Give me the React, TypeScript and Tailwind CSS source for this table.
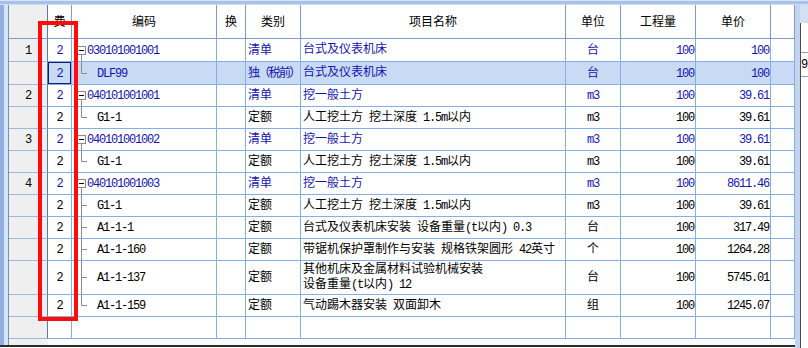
import React, { FC } from "react"

type Row = {
    rn?: string
    code?: string
    kind?: "parent" | "mid" | "last"
    cat?: string
    name?: string[]
    unit?: string
    qty?: string
    price?: string
    blue?: boolean
    sel?: boolean
    h: number
    hc: string
}

const rows: Row[] = [
    { rn: "1", code: "030101001001", kind: "parent", cat: "清单", name: ["台式及仪表机床"], unit: "台", qty: "100", price: "100", blue: true, h: 23, hc: "h-[23px]" },
    { code: "DLF99", kind: "last", cat: "独（税前）", name: ["台式及仪表机床"], unit: "台", qty: "100", price: "100", blue: true, sel: true, h: 23, hc: "h-[23px]" },
    { rn: "2", code: "040101001001", kind: "parent", cat: "清单", name: ["挖一般土方"], unit: "m3", qty: "100", price: "39.61", blue: true, h: 22, hc: "h-[22px]" },
    { code: "G1-1", kind: "last", cat: "定额", name: ["人工挖土方 挖土深度 1.5m以内"], unit: "m3", qty: "100", price: "39.61", h: 22, hc: "h-[22px]" },
    { rn: "3", code: "040101001002", kind: "parent", cat: "清单", name: ["挖一般土方"], unit: "m3", qty: "100", price: "39.61", blue: true, h: 22, hc: "h-[22px]" },
    { code: "G1-1", kind: "last", cat: "定额", name: ["人工挖土方 挖土深度 1.5m以内"], unit: "m3", qty: "100", price: "39.61", h: 22, hc: "h-[22px]" },
    { rn: "4", code: "040101001003", kind: "parent", cat: "清单", name: ["挖一般土方"], unit: "m3", qty: "100", price: "8611.46", blue: true, h: 22, hc: "h-[22px]" },
    { code: "G1-1", kind: "mid", cat: "定额", name: ["人工挖土方 挖土深度 1.5m以内"], unit: "m3", qty: "100", price: "39.61", h: 22, hc: "h-[22px]" },
    { code: "A1-1-1", kind: "mid", cat: "定额", name: ["台式及仪表机床安装 设备重量(t以内) 0.3"], unit: "台", qty: "100", price: "317.49", h: 22, hc: "h-[22px]" },
    { code: "A1-1-160", kind: "mid", cat: "定额", name: ["带锯机保护罩制作与安装 规格铁架圆形 42英寸"], unit: "个", qty: "100", price: "1264.28", h: 22, hc: "h-[22px]" },
    { code: "A1-1-137", kind: "mid", cat: "定额", name: ["其他机床及金属材料试验机械安装", "设备重量(t以内) 12"], unit: "台", qty: "100", price: "5745.01", h: 34, hc: "h-[34px]" },
    { code: "A1-1-159", kind: "last", cat: "定额", name: ["气动踢木器安装 双面卸木"], unit: "组", qty: "100", price: "1245.07", h: 22, hc: "h-[22px]" },
    { h: 22, hc: "h-[22px]" },
]

// ascii runs get squeezed so digits take half a CJK cell, like SimSun
const Txt: FC<{ s?: string }> = ({ s }) => {
    if (!s) return null
    return (
        <>
            {s.split(/([\x20-\x7e]+)/).filter(Boolean).map((p, i) =>
                /^[\x20-\x7e]+$/.test(p)
                    ? <span key={i} className="tracking-[-1.2px]">{p}</span>
                    : <span key={i}>{p}</span>
            )}
        </>
    )
}

const Tree: FC<{ kind: "parent" | "mid" | "last"; h: number }> = ({ kind, h }) => {
    const mid = Math.floor(h / 2) + 0.5
    if (kind === "parent") {
        return (
            <svg width={15} height={h} className="shrink-0">
                <rect x={5.5} y={mid - 4} width={8} height={8} fill="white" stroke="#8c8c8c" />
                <line x1={7} y1={mid} x2={12} y2={mid} stroke="#000" />
                <line x1={9.5} y1={mid + 4} x2={9.5} y2={h} stroke="#8c8c8c" />
            </svg>
        )
    }
    return (
        <svg width={25} height={h} className="shrink-0">
            <line x1={9.5} y1={0} x2={9.5} y2={kind === "last" ? mid : h} stroke="#8c8c8c" />
            <line x1={9.5} y1={mid} x2={15} y2={mid} stroke="#8c8c8c" />
        </svg>
    )
}

const cell = "border-r border-b border-[#86aee6] flex items-center overflow-hidden whitespace-nowrap"

const GridRow: FC<{ r: Row }> = ({ r }) => {
    const tc = r.blue ? "text-[#1414b4]" : "text-black"
    const bg = r.sel ? "bg-[#c8daf4]" : "bg-white"
    return (
        <div className={`grid grid-cols-[39px_24px_145px_29px_55px_265px_55px_75px_75px_24px] ${r.hc}`}>
            <div className="border-r border-b border-r-[#5b79a8] border-b-[#9bb8e0] bg-[#efefef] flex items-center justify-center pt-[1px] text-black">
                <Txt s={r.rn} />
            </div>
            <div className={`${cell} ${bg} justify-center ${tc}`}>
                {r.sel ? (
                    <div className="w-full h-full border border-[#0c1c74] flex items-center justify-center pt-[1px]">
                        <Txt s="2" />
                    </div>
                ) : r.code ? <span className="pt-[1px]"><Txt s="2" /></span> : null}
            </div>
            <div className={`${cell} ${bg} ${tc}`}>
                {r.kind && <Tree kind={r.kind} h={r.h - 1} />}
                <span className="pt-[1px]"><Txt s={r.code} /></span>
            </div>
            <div className={`${cell} ${bg}`}></div>
            <div className={`${cell} ${bg} pl-[2px] pt-[1px] ${tc}`}>
                {r.cat && r.cat.length > 2
                    ? <span className="tracking-[-1.7px]">{r.cat}</span>
                    : <Txt s={r.cat} />}
            </div>
            <div className={`${cell} ${bg} pl-[2px] pt-[1px] ${tc}`}>
                <div className="flex flex-col leading-[15px]">
                    {r.name?.map((n, i) => <div key={i}><Txt s={n} /></div>)}
                </div>
            </div>
            <div className={`${cell} ${bg} justify-center pt-[1px] ${tc}`}>
                <Txt s={r.unit} />
            </div>
            <div className={`${cell} ${bg} justify-end pr-[1px] pt-[1px] ${tc}`}>
                <Txt s={r.qty} />
            </div>
            <div className={`${cell} ${bg} justify-end pr-[1px] pt-[1px] ${tc}`}>
                <Txt s={r.price} />
            </div>
            <div className={`${cell} ${bg}`}></div>
        </div>
    )
}

const head = "border-r border-b border-[#7f9cc8] bg-white flex items-center justify-center pt-[3px]"

const App: FC = () => {
    return (
        <div className="w-[808px] h-[348px] bg-white overflow-hidden relative font-['Liberation_Mono','Noto_Sans_CJK_SC',monospace] text-[12px] leading-[14px] text-black">
            {/* window frame top */}
            <div className="h-[5px] bg-[#a6c2ea] border-t border-t-[#d8e5f6] border-b border-b-[#cddcf2]"></div>

            <div className="flex h-[343px]">
                <div className="flex flex-col w-[795px]">
                    <div className="flex h-[340px]">
                        <div className="w-[8px] bg-[#d9e5f5] border-l-[4px] border-l-[#8fb0e0]"></div>

                        <div className="w-[787px] flex flex-col border-l border-[#6e93cc]">
                            <div className="grid grid-cols-[39px_24px_145px_29px_55px_265px_55px_75px_75px_24px] h-[34px]">
                                <div className="border-r border-b border-r-[#5b79a8] border-b-[#7f9cc8] bg-[#efefef]"></div>
                                <div className={head}>费</div>
                                <div className={head}>编码</div>
                                <div className={head}>换</div>
                                <div className={head}>类别</div>
                                <div className={head}>项目名称</div>
                                <div className={head}>单位</div>
                                <div className={head}>工程量</div>
                                <div className={head}>单价</div>
                                <div className={head}></div>
                            </div>

                            {rows.map((r, i) => <GridRow key={i} r={r} />)}

                            <div className="flex-1 flex">
                                <div className="w-[39px] bg-[#f0f0f0]"></div>
                                <div className="flex-1 bg-[#fafafa]"></div>
                            </div>
                        </div>
                    </div>
                    <div className="h-[2px] bg-[#2b2b2b]"></div>
                    <div className="h-[1px] bg-white"></div>
                </div>

                {/* splitter */}
                <div className="w-[5px] bg-[#c3d5ee]"></div>

                {/* next panel peeking in */}
                <div className="w-[8px] flex flex-col bg-[#d3e0f3]">
                    <div className="h-[18px]"></div>
                    <div className="flex-1 bg-white border-l border-[#4a4a4a] flex flex-col">
                        <div className="h-[30px] border-b border-[#9a9a9a]"></div>
                        <div className="h-[24px] border-b border-[#9a9a9a] flex items-center text-black">9</div>
                    </div>
                </div>
            </div>

            {/* red annotation box */}
            <div className="absolute left-[38px] top-[21px] w-[40px] h-[300px] border-4 border-[#ff0d0d]"></div>
        </div>
    )
}

export default App
